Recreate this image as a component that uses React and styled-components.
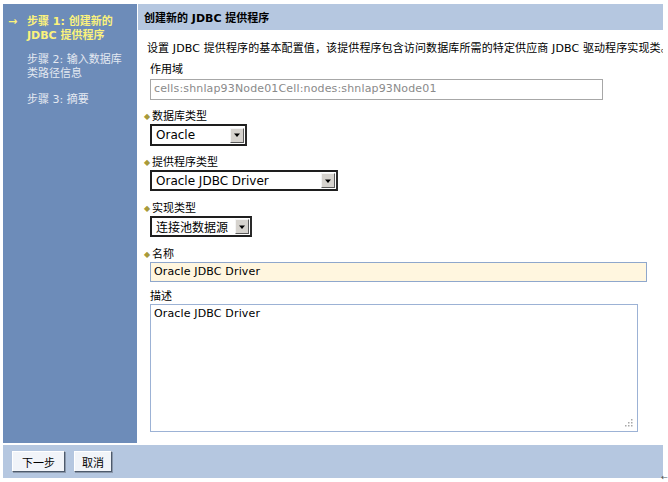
import React from "react";
import styled, { createGlobalStyle } from "styled-components";

const Global = createGlobalStyle`
  html, body { margin: 0; padding: 0; background: #ffffff; }
  body { font-family: "DejaVu Sans", "Noto Sans CJK SC", sans-serif; font-size: 11px; color: #000; }
`;

const Page = styled.div`
  width: 668px;
  height: 482px;
  box-sizing: border-box;
  padding: 4px 5px 4px 3px;
  display: grid;
  grid-template-columns: 134px 1fr;
  grid-template-rows: 439px 33px;
  column-gap: 1px;
  row-gap: 2px;
  position: relative;
  overflow: hidden;
`;

const Sidebar = styled.nav`
  background: #6d8cb9;
  padding: 11px 0 0 5px;
  display: flex;
  flex-direction: column;
  gap: 12px;
`;

const Step = styled.div`
  display: flex;
  gap: 7px;
  line-height: 14px;
  margin-bottom: ${(p) => p.$mb ?? 0}px;
  color: ${(p) => (p.$active ? "#fbf27c" : "#e4e9f1")};
  font-weight: ${(p) => (p.$active ? "bold" : "normal")};
`;

const StepMarker = styled.span`
  width: 12px;
  flex: none;
  font-weight: bold;
`;

const Main = styled.main`
  display: flex;
  flex-direction: column;
  background: #ffffff;
  min-width: 0;
  overflow: hidden;
`;

const TitleBar = styled.div`
  height: 26px;
  background: #b5c7e0;
  display: flex;
  align-items: center;
  padding-left: 6px;
  font-weight: bold;
`;

const Content = styled.div`
  display: flex;
  flex-direction: column;
  padding: 12px 0 0 12px;
`;

const Intro = styled.p`
  margin: 0 0 0 -3px;
  line-height: 14px;
  letter-spacing: 0.12px;
  white-space: nowrap;
  overflow: hidden;
`;

const Field = styled.div`
  display: flex;
  flex-direction: column;
  align-items: flex-start;
  margin-top: ${(p) => p.$gap}px;
`;

const Label = styled.label`
  line-height: 14px;
  margin-bottom: ${(p) => p.$mb ?? 0}px;
  display: flex;
  align-items: center;
  margin-left: ${(p) => (p.$required ? "-6px" : "0")};
`;

const Star = styled.span`
  color: #a89a3a;
  font-size: 8px;
  line-height: 14px;
  width: 8px;
`;

const TextBox = styled.div`
  box-sizing: border-box;
  width: ${(p) => p.$w}px;
  height: ${(p) => p.$h}px;
  border: 1px solid ${(p) => p.$border};
  background: ${(p) => p.$bg};
  color: ${(p) => p.$color};
  padding: 2px 3px;
  line-height: 14px;
  letter-spacing: 0.15px;
  position: relative;
`;

const SelectBox = styled.div`
  box-sizing: border-box;
  width: ${(p) => p.$w}px;
  height: ${(p) => p.$h}px;
  border: 2px solid #1e1e1e;
  border-right-color: #2a2a2a;
  background: #fff;
  display: flex;
  align-items: center;
  justify-content: space-between;
  padding: 0 1px 0 4px;
  font-size: 12px;
`;

const SelectButton = styled.span`
  width: 14px;
  height: 15px;
  box-sizing: border-box;
  background: #d6d3ce;
  border: 1px solid;
  border-color: #f4f4f4 #5a5a5a #5a5a5a #f4f4f4;
  display: flex;
  align-items: center;
  justify-content: center;
`;

const Grip = styled.svg`
  position: absolute;
  right: 3px;
  bottom: 3px;
`;

const Footer = styled.footer`
  grid-column: 1 / -1;
  background: #b5c7e0;
  display: flex;
  align-items: center;
  gap: 9px;
  padding-left: 9px;
`;

const Button = styled.button`
  height: 21px;
  padding: 0 ${(p) => p.$px}px;
  font-family: inherit;
  font-size: 11px;
  background: #f1f4f9;
  border: 1px solid;
  border-color: #ffffff #4d5a6c #4d5a6c #ffffff;
  box-shadow: 1px 1px 0 #8a97aa;
  color: #000;
`;

const Corner = styled.span`
  position: absolute;
  right: 0;
  bottom: 0;
  font-size: 8px;
  line-height: 8px;
  color: #555;
`;

const Arrow = () => (
  <svg width="8" height="6" viewBox="0 0 8 6">
    <path d="M1 1.5 H7 L4 5 Z" fill="#000" />
  </svg>
);

const Select = ({ w, h, value }) => (
  <SelectBox $w={w} $h={h}>
    <span>{value}</span>
    <SelectButton>
      <Arrow />
    </SelectButton>
  </SelectBox>
);

export default function App() {
  return (
    <>
      <Global />
      <Page>
        <Sidebar>
          <Step $active $mb={-2}>
            <StepMarker>→</StepMarker>
            <span>
              步骤 1: 创建新的
              <br />
              JDBC 提供程序
            </span>
          </Step>
          <Step>
            <StepMarker />
            <span>
              步骤 2: 输入数据库
              <br />
              类路径信息
            </span>
          </Step>
          <Step>
            <StepMarker />
            <span>步骤 3: 摘要</span>
          </Step>
        </Sidebar>
        <Main>
          <TitleBar>创建新的 JDBC 提供程序</TitleBar>
          <Content>
            <Intro>
              设置 JDBC 提供程序的基本配置值，该提供程序包含访问数据库所需的特定供应商 JDBC 驱动程序实现类。向
            </Intro>
            <Field $gap={7}>
              <Label $mb={2}>作用域</Label>
              <TextBox $w={453} $h={21} $border="#a7a7a7" $bg="#fff" $color="#8a8a8a">
                cells:shnlap93Node01Cell:nodes:shnlap93Node01
              </TextBox>
            </Field>
            <Field $gap={10}>
              <Label $required>
                <Star>◆</Star>数据库类型
              </Label>
              <Select w={97} h={22} value="Oracle" />
            </Field>
            <Field $gap={10}>
              <Label $required>
                <Star>◆</Star>提供程序类型
              </Label>
              <Select w={188} h={21} value="Oracle JDBC Driver" />
            </Field>
            <Field $gap={11}>
              <Label $required>
                <Star>◆</Star>实现类型
              </Label>
              <Select w={102} h={21} value="连接池数据源" />
            </Field>
            <Field $gap={11}>
              <Label $required>
                <Star>◆</Star>名称
              </Label>
              <TextBox $w={497} $h={20} $border="#8fa7cc" $bg="#fff6df" $color="#000">
                Oracle JDBC Driver
              </TextBox>
            </Field>
            <Field $gap={8}>
              <Label>描述</Label>
              <TextBox $w={488} $h={128} $border="#9cb2d5" $bg="#fff" $color="#000">
                Oracle JDBC Driver
                <Grip width="10" height="10" viewBox="0 0 10 10">
                  <g fill="#a8a8a8">
                    <rect x="7" y="1" width="1.5" height="1.5" />
                    <rect x="4" y="4" width="1.5" height="1.5" />
                    <rect x="7" y="4" width="1.5" height="1.5" />
                    <rect x="1" y="7" width="1.5" height="1.5" />
                    <rect x="4" y="7" width="1.5" height="1.5" />
                    <rect x="7" y="7" width="1.5" height="1.5" />
                  </g>
                </Grip>
              </TextBox>
            </Field>
          </Content>
        </Main>
        <Footer>
          <Button $px={9}>下一步</Button>
          <Button $px={7}>取消</Button>
        </Footer>
        <Corner>←</Corner>
      </Page>
    </>
  );
}
